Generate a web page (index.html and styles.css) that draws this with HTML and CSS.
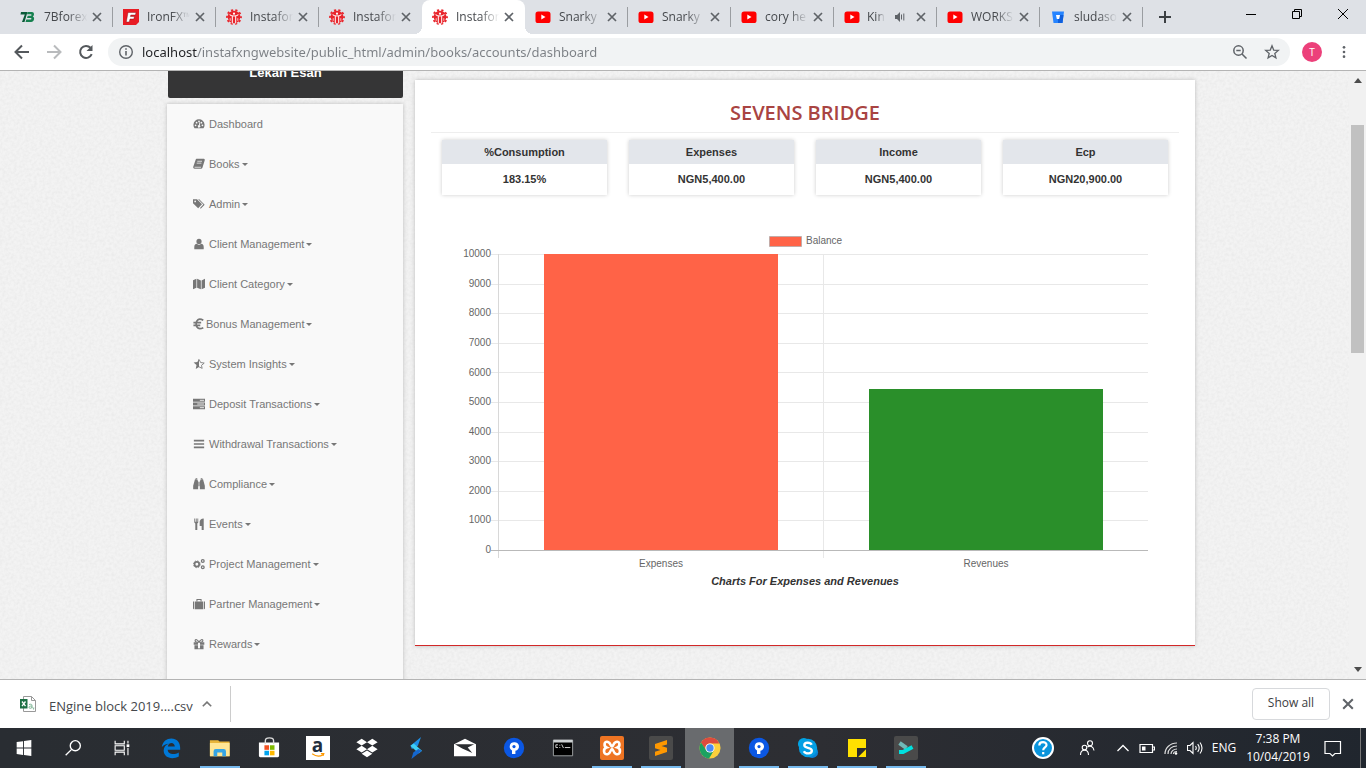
FILE: index.html
```html
<!DOCTYPE html>
<html lang="en">
<head>
<meta charset="utf-8">
<title>Instaforex NG Admin - Accounts Dashboard</title>
<link rel="stylesheet" href="styles.css">
</head>
<body>
<svg class="defs" aria-hidden="true">
  <symbol id="x" viewBox="0 0 10 10"><path d="M1 1l8 8M9 1l-8 8" stroke="#5f6368" stroke-width="1.7" fill="none"/></symbol>
  <symbol id="yt" viewBox="0 0 16 16"><rect x="0.5" y="2.5" width="15" height="11.5" rx="2.6" fill="#f00"/><path d="M6.3 5.6v5l4.2-2.5z" fill="#fff"/></symbol>
  <symbol id="insta" viewBox="0 0 16 16"><circle cx="8" cy="8" r="6.3" fill="#e8242b"/><circle cx="8" cy="8" r="7" fill="none" stroke="#e8242b" stroke-width="1.800" stroke-dasharray="2.200 2.200" stroke-dashoffset="1.100"/><g fill="none" stroke="#fff"><path d="M3.600 5.500C4.500 7 6 7 8 7s3.500 0 4.400-1.500" stroke-width="1.100"/><path d="M6.300 7v7.500M9.700 7v7.500" stroke-width="1"/><path d="M4.200 9.200v2.600M11.800 9.200v2.600" stroke-width=".7"/></g><circle cx="8" cy="4.700" r="1.100" fill="#fff"/></symbol>
  <symbol id="maps" viewBox="0 0 22 22"><circle cx="11" cy="11" r="10.200" fill="#0b57e3"/><path d="M11 5.300a4.300 4.300 0 0 0-2 8.100V17h3.400v-3.200A4.300 4.300 0 0 0 11 5.300z" fill="#fff"/><circle cx="11" cy="9.600" r="1.600" fill="#0b57e3"/></symbol>
</svg>

<header class="tabs">
  <div class="tab"><button class="tab-main"><svg viewBox="0 0 16 16"><path d="M1 3h6.500L4.500 13H2L4.800 5.500H.5z" fill="#0a5a38"/><path d="M7.500 3H12c2.500 0 2.600 3.600.8 4.600 2.400 1 1.300 5.400-1.600 5.400H5.500l.8-2.400h4.400c1.100 0 1-1.600 0-1.600H7l.7-2.300h3.100c1 0 1-1.400.1-1.400H7z" fill="#16804f"/></svg><span>7Bforex</span></button><button class="close" aria-label="Close"><svg><use href="#x"/></svg></button></div>
  <div class="tab"><button class="tab-main"><svg viewBox="0 0 16 16"><path d="M0 0h16v13l-3 3H0z" fill="#e81c24"/><path d="M5 3.500h8L12.400 6H7.800l-.4 1.500h4L10.800 10H7l-.8 3H3.300z" fill="#fff" stroke="#6d0d12" stroke-width=".4"/></svg><span>IronFX™</span></button><button class="close" aria-label="Close"><svg><use href="#x"/></svg></button></div>
  <div class="tab"><button class="tab-main"><svg><use href="#insta"/></svg><span>Instafor</span></button><button class="close" aria-label="Close"><svg><use href="#x"/></svg></button></div>
  <div class="tab before"><button class="tab-main"><svg><use href="#insta"/></svg><span>Instafor</span></button><button class="close" aria-label="Close"><svg><use href="#x"/></svg></button></div>
  <div class="tab active"><button class="tab-main"><svg><use href="#insta"/></svg><span>Instafor</span></button><button class="close" aria-label="Close"><svg><use href="#x"/></svg></button></div>
  <div class="tab"><button class="tab-main"><svg><use href="#yt"/></svg><span>Snarky</span></button><button class="close" aria-label="Close"><svg><use href="#x"/></svg></button></div>
  <div class="tab"><button class="tab-main"><svg><use href="#yt"/></svg><span>Snarky</span></button><button class="close" aria-label="Close"><svg><use href="#x"/></svg></button></div>
  <div class="tab"><button class="tab-main"><svg><use href="#yt"/></svg><span>cory he</span></button><button class="close" aria-label="Close"><svg><use href="#x"/></svg></button></div>
  <div class="tab"><button class="tab-main playing"><svg><use href="#yt"/></svg><span>Kin</span><svg class="sound" viewBox="0 0 12 12"><path d="M1 4h2l3-3v10L3 8H1z" fill="#5f6368"/><path d="M7.500 3.500v5M9.800 2.500v7" stroke="#5f6368" fill="none"/></svg></button><button class="close" aria-label="Close"><svg><use href="#x"/></svg></button></div>
  <div class="tab"><button class="tab-main"><svg><use href="#yt"/></svg><span>WORKS</span></button><button class="close" aria-label="Close"><svg><use href="#x"/></svg></button></div>
  <div class="tab"><button class="tab-main"><svg viewBox="0 0 16 16"><path d="M2 2.500h12L12.500 14h-9z" fill="#2684ff"/><path d="M8 6h5.500L12.500 14H8z" fill="#0f5fdc"/><path d="M6 6h4l-.8 4H6.800z" fill="#fff"/></svg><span>sludaso</span></button><button class="close" aria-label="Close"><svg><use href="#x"/></svg></button></div>
  <button class="newtab" aria-label="New tab"><svg viewBox="0 0 12 12"><path d="M6 0v12M0 6h12" stroke="#3c4043" stroke-width="2"/></svg></button>
  <div class="window-controls">
    <button aria-label="Minimize"><svg viewBox="0 0 12 12"><path d="M1 6.500h10" stroke="#000"/></svg></button>
    <button aria-label="Restore"><svg viewBox="0 0 12 12"><path d="M1.500 3.500h7v7h-7zM3.500 3.500v-2h7v7h-2" fill="none" stroke="#000"/></svg></button>
    <button aria-label="Close window"><svg viewBox="0 0 12 12"><path d="M1 1l10 10M11 1L1 11" stroke="#000"/></svg></button>
  </div>
</header>

<nav class="toolbar">
  <button aria-label="Back"><svg viewBox="0 0 16 16"><path d="M15 8H2M8 1.500L1.500 8 8 14.500" fill="none" stroke="#54585c" stroke-width="2"/></svg></button>
  <button aria-label="Forward"><svg viewBox="0 0 16 16"><path d="M1 8h13M8 1.500L14.500 8 8 14.500" fill="none" stroke="#b9bbbd" stroke-width="2"/></svg></button>
  <button aria-label="Reload"><svg viewBox="0 0 16 16"><path d="M13.700 10.200A6 6 0 1 1 12.500 3.800" fill="none" stroke="#54585c" stroke-width="2"/><path d="M14.500 1v6h-6z" fill="#54585c"/></svg></button>
  <div class="omnibox">
    <svg viewBox="0 0 16 16"><circle cx="8" cy="8" r="6.300" fill="none" stroke="#5f6368" stroke-width="1.400"/><path d="M8 7v4.500M8 4.200v1.600" stroke="#5f6368" stroke-width="1.600"/></svg>
    <input type="text" aria-label="Address" value="localhost/instafxngwebsite/public_html/admin/books/accounts/dashboard">
    <button aria-label="Zoom"><svg viewBox="0 0 16 16"><circle cx="6.500" cy="6.500" r="4.700" fill="none" stroke="#5f6368" stroke-width="1.500"/><path d="M4.300 6.500h4.400M10 10l4.500 4.500" stroke="#5f6368" stroke-width="1.500"/></svg></button>
    <button aria-label="Bookmark"><svg viewBox="0 0 16 16"><path d="M8 1.800l1.700 4.300 4.600.3-3.500 3 1.100 4.500L8 11.500l-3.900 2.400 1.100-4.500-3.500-3 4.600-.3z" fill="none" stroke="#5f6368" stroke-width="1.300"/></svg></button>
  </div>
  <button class="avatar">T</button>
  <button class="menu" aria-label="Menu"><svg viewBox="0 0 16 16"><g fill="#5f6368"><circle cx="8" cy="2.700" r="1.500"/><circle cx="8" cy="8" r="1.500"/><circle cx="8" cy="13.300" r="1.500"/></g></svg></button>
</nav>

<div class="viewport">
  <div class="page">
    <div class="container">
      <aside class="sidebar">
        <div class="user">Lekan Esan</div>
        <nav class="side-menu">
          <a href="#"><svg viewBox="0 0 14 14"><path d="M1.800 12A6.500 6.500 0 1 1 12.200 12z"/><g fill="#f9f9f9"><circle cx="3" cy="8.500" r="1"/><circle cx="4.200" cy="5.500" r="1"/><circle cx="7" cy="4" r="1"/><circle cx="9.800" cy="5.500" r="1"/><circle cx="11" cy="8.500" r="1"/><path d="M7.500 5l1 .2-.6 3.300a1.500 1.500 0 1 1-1-.2z"/></g></svg>Dashboard</a>
          <a href="#"><svg viewBox="0 0 14 14"><path d="M4.500 1h8.300c.9.300 1.100.9.900 1.600l-2.600 8.600c-.3.900-.9 1.400-1.800 1.400H1.900C.5 12.600-.1 11.300.4 10L3 2.300C3.300 1.500 3.700 1 4.500 1z"/><path d="M5 3.800h5.500M4.300 6h5.500M1.800 10.800h7.500" stroke="#f9f9f9" stroke-width=".9" fill="none"/></svg>Books<i class="caret"></i></a>
          <a href="#"><svg viewBox="0 0 14 14"><path d="M0 1.500h4.700L10.500 7.300 6 12 0 6zM6 1.500h1.300L13.600 7.800 9 12.600l-.8-.8L12 7.600z"/><circle cx="2.500" cy="4" r="1" fill="#f9f9f9"/></svg>Admin<i class="caret"></i></a>
          <a href="#"><svg viewBox="0 0 14 14"><circle cx="7" cy="4" r="3"/><path d="M1.500 13v-2.500c0-2.500 1.500-3.700 3-3.700 1.500 1.300 3.500 1.300 5 0 1.500 0 3 1.200 3 3.700V13z"/></svg>Client Management<i class="caret"></i></a>
          <a href="#"><svg viewBox="0 0 14 14"><path d="M0 2.500L4 1v10.500L0 13zM4.800 1l4.400 1.800V13l-4.400-1.700zM10 2.800L14 1v10.500L10 13z"/></svg>Client Category<i class="caret"></i></a>
          <a href="#" class="euro"><svg viewBox="0 0 14 14"><path d="M12 2.700C6.500-.5 3.700 2.700 3.700 7S6.500 14 12 11.300M.5 5.500h9M.5 8.500h8" fill="none" stroke="#777" stroke-width="2"/></svg>Bonus Management<i class="caret"></i></a>
          <a href="#"><svg viewBox="0 0 14 14"><path d="M7 .8v9.800l-3.800 2.200.9-4.500L.7 5.300l4.400-.5z"/><path d="M7 1.500l1.900 3.800 4.200.6-3.200 2.700.8 3.500L7 10.300" fill="none" stroke="#777" stroke-width="1"/></svg>System Insights<i class="caret"></i></a>
          <a href="#"><svg viewBox="0 0 14 14"><path d="M0 1h14v3.400H0zM0 5.300h14v3.400H0zM0 9.600h14V13H0z"/><path d="M8 2.700h4.800M5 7h7.800M8 11.300h4.800" stroke="#f9f9f9" stroke-width="1"/></svg>Deposit Transactions<i class="caret"></i></a>
          <a href="#"><svg viewBox="0 0 14 14"><path d="M1 2h12v2H1zM1 6h12v2H1zM1 10h12v2H1z"/></svg>Withdrawal Transactions<i class="caret"></i></a>
          <a href="#"><svg viewBox="0 0 14 14"><path d="M2.300 1.500H5L6 4v9H.2V9zM9 1.500h2.700L13.800 9v4H8V4zM6.400 4.500h1.200v5H6.400zM3 0h2v1H3zM9 0h2v1H9z"/></svg>Compliance<i class="caret"></i></a>
          <a href="#"><svg viewBox="0 0 14 14"><path d="M1.500.5h1v4h.8v-4h1v4h.8v-4h1v4.800L5 6.500V14H2.700V6.500L1.500 5.300zM12.500.5V14h-2.400V9.200H7.800V4.500c0-2 1.700-4 4.700-4z"/></svg>Events<i class="caret"></i></a>
          <a href="#"><svg viewBox="0 0 14 14"><g fill="none" stroke="#777"><circle cx="4.500" cy="7.300" r="2.700" stroke-width="2"/><circle cx="4.500" cy="7.300" r="4" stroke-width="1" stroke-dasharray="1.600 1.540"/><circle cx="11.400" cy="3.500" r="1.600" stroke-width="1.500"/><circle cx="11.400" cy="10.900" r="1.600" stroke-width="1.500"/></g></svg>Project Management<i class="caret"></i></a>
          <a href="#"><svg viewBox="0 0 14 14"><path d="M0 4h1.500v9H.8L0 12.200zM2.300 4h9.400v9H2.300zM12.500 4H14v8.200l-.8.800h-.7z"/><path d="M4.600 4V1.700h4.800V4" fill="none" stroke="#777" stroke-width="1.200"/></svg>Partner Management<i class="caret"></i></a>
          <a href="#"><svg viewBox="0 0 14 14"><path d="M.8 5h5v3h-5zM8.200 5h5v3h-5zM1.700 8.500h4.100V13H1.700zM8.200 8.500h4.100V13H8.200zM6 12h2v1H6z"/><path d="M7 5C5.500 1.500 2.500 1.200 2.500 3.200 2.500 4.500 4 5 7 5zM7 5c1.500-3.500 4.500-3.800 4.500-1.800C11.500 4.500 10 5 7 5z" fill="none" stroke="#777" stroke-width="1.300"/></svg>Rewards<i class="caret"></i></a>
        </nav>
      </aside>
      <main class="panel">
        <h1>SEVENS BRIDGE</h1>
        <section class="stats">
          <div class="stat"><h2>%Consumption</h2><p>183.15%</p></div>
          <div class="stat"><h2>Expenses</h2><p>NGN5,400.00</p></div>
          <div class="stat"><h2>Income</h2><p>NGN5,400.00</p></div>
          <div class="stat"><h2>Ecp</h2><p>NGN20,900.00</p></div>
        </section>
        <figure>
          <svg class="chart" viewBox="0 0 748 345" role="img" aria-label="Balance by expenses and revenues">
            <path d="M338.500 8.500h32v10h-32z" fill="#ff6347" stroke="#aaa" stroke-opacity=".7"/>
            <text x="375" y="16">Balance</text>
            <path d="M60 26.500h657M60 56.500h657M60 85.500h657M60 115.500h657M60 144.500h657M60 174.500h657M60 204.500h657M60 233.500h657M60 263.500h657M60 292.500h657M392.500 26v304" stroke="#e8e8e8"/>
            <path d="M67.500 26v304" stroke="#d8d8d8"/>
            <path d="M113 26h234v296H113z" fill="#ff6347"/>
            <path d="M438 161h234v161H438z" fill="#2a8f2a"/>
            <path d="M60 322.500h657" stroke="#b9b9b9"/>
            <g text-anchor="end"><text x="60" y="29">10000</text><text x="60" y="59">9000</text><text x="60" y="88">8000</text><text x="60" y="118">7000</text><text x="60" y="148">6000</text><text x="60" y="177">5000</text><text x="60" y="207">4000</text><text x="60" y="236">3000</text><text x="60" y="266">2000</text><text x="60" y="295">1000</text><text x="60" y="325">0</text></g>
            <g text-anchor="middle"><text x="230" y="339">Expenses</text><text x="555" y="339">Revenues</text></g>
          </svg>
          <figcaption>Charts For Expenses and Revenues</figcaption>
        </figure>
      </main>
    </div>
  </div>
  <div class="scrollbar">
    <svg viewBox="0 0 8 5"><path d="M0 5l4-5 4 5z" fill="#4d4d4d"/></svg>
    <div class="track"><div class="thumb"></div></div>
    <svg viewBox="0 0 8 5"><path d="M0 0l4 5 4-5z" fill="#4d4d4d"/></svg>
  </div>
</div>

<section class="downloads">
  <button class="file">
    <svg class="csv" viewBox="0 0 16 16"><path d="M3.500.5h8l4 4v11h-12z" fill="#fff" stroke="#999"/><path d="M11.500.5v4h4" fill="none" stroke="#999"/><path d="M0 3h7.500v9.500H0z" fill="#1d7044"/><path d="M2 5.500l3.500 4.700M5.500 5.500L2 10.200" stroke="#fff" stroke-width="1.300"/><path d="M9 8.500c3-.8 3 .4 3 1.500v2.300M12 10c-2 0-3 .3-3 1.400 0 1.500 3 1 3-.4M13.800 11.500l-.3 2" fill="none" stroke="#7db594"/></svg>
    <span>ENgine block 2019....csv</span>
    <svg class="up" viewBox="0 0 10 6"><path d="M.8 5.300L5 1.100l4.200 4.200" fill="none" stroke="#777" stroke-width="1.600"/></svg>
  </button>
  <button class="show-all">Show all</button>
  <button class="close big" aria-label="Close downloads"><svg><use href="#x"/></svg></button>
</section>

<footer class="taskbar">
  <div class="apps">
    <button aria-label="Start"><svg viewBox="0 0 24 24"><path d="M4 5.500l7-1v7H4zM12 4.300l8-1.100v8.300h-8zM4 12.500h7v7l-7-1zM12 12.500h8v8.300l-8-1.100z" fill="#fff"/></svg></button>
    <button aria-label="Search"><svg viewBox="0 0 24 24"><circle cx="14.500" cy="9.500" r="5.500" fill="none" stroke="#fff" stroke-width="1.500"/><path d="M10.500 13.500L4 20" stroke="#fff" stroke-width="1.500"/></svg></button>
    <button aria-label="Task view"><svg viewBox="0 0 24 24"><path d="M4.500 4v3.500h10V4M4.500 20v-3.500h10V20M4.500 9.500h10v5h-10zM18.500 4v3M18.500 12v8" fill="none" stroke="#fff" stroke-width="1.200"/><path d="M17 8h3v3h-3z" fill="#fff"/></svg></button>
    <button aria-label="Edge"><svg viewBox="0 0 24 24"><path d="M2 11C3 4.500 7.500 1.500 12.300 1.500c6 0 9.700 4 9.700 10.300v2H8.400c.3 5.500 7.600 5.800 12.100 3v4.400C13.500 25 4 23 4 14.800c0-3.700 2.200-6.200 5.500-7.500C6.500 7.400 3.700 9 2 11zm6.500-.6h7.600c0-5-6.700-5.200-7.600 0z" fill="#0078d7"/></svg></button>
    <button class="open" aria-label="File Explorer"><svg viewBox="0 0 24 24"><path d="M1 3.500h9l1.500 1.500H22.500V21H1z" fill="#e8b53a"/><path d="M1 6.500h21.500V21H1z" fill="#ffe695"/><path d="M5 21v-5.500q0-2.500 2.500-2.500h8.500q2.500 0 2.500 2.500V21h-4v-4h-5.500v4z" fill="#35a5e5"/></svg></button>
    <button aria-label="Store"><svg viewBox="0 0 24 24"><path d="M1 6h22v14.500q0 1.500-1.500 1.500h-19Q1 22 1 20.500z" fill="#fff"/><path d="M8 8V4q0-3 4.500-3T17 4v4" fill="none" stroke="#ddd" stroke-width="1.500"/><path d="M7 9h5v5H7z" fill="#f25022"/><path d="M13 9h5v5h-5z" fill="#7fba00"/><path d="M7 15h5v5H7z" fill="#00a4ef"/><path d="M13 15h5v5h-5z" fill="#ffb900"/></svg></button>
    <button aria-label="Amazon"><span class="amazon">a<svg viewBox="0 0 18 6"><path d="M2 1q7 5 13 1M12.500.8L16 .5l-1 3" fill="none" stroke="#f90" stroke-width="1.500"/></svg></span></button>
    <button aria-label="Dropbox"><svg viewBox="0 0 24 24"><path d="M6.200 2L12 5.700 6.200 9.400.4 5.700zM17.800 2l5.800 3.700-5.800 3.700L12 5.700zM6.200 9.600l5.800 3.700L6.200 17 .4 13.300zM17.800 9.600l5.800 3.700-5.800 3.700-5.800-3.700zM12 14.600l5.800 3.700L12 22l-5.800-3.700z" fill="#fff"/></svg></button>
    <button aria-label="Notes app"><svg viewBox="0 0 24 24"><path d="M17.500 0L6 9.500 7.500 13 14 9.500z" fill="#1e90e8"/><path d="M6 9.500L9.500 7l9 8-3.500 3z" fill="#3fd0f5"/><path d="M18.500 15L7 24l2-7 5.500-4z" fill="#1567cf"/></svg></button>
    <button aria-label="Mail"><svg viewBox="0 0 24 24"><path d="M0 8l12-6 12 6v13H0z" fill="#fff"/><path d="M1 8h21l-7 3.500 5 6-11-5z" fill="#2b2d31"/></svg></button>
    <button aria-label="Maps"><svg><use href="#maps"/></svg></button>
    <button aria-label="Command Prompt"><svg viewBox="0 0 24 24"><path d="M1.500 3.500h21v17h-21z" fill="#000" stroke="#a4a8aa"/><path d="M1.500 4.500h21" stroke="#ccd0d2" stroke-width="3"/><path d="M6.500 8.500H4.200v3h2.300M8.500 8.500v1M8.500 11v1M10.500 8l2 4M14 11.500h6" fill="none" stroke="#ddd"/></svg></button>
    <button class="open tile" aria-label="XAMPP"><svg viewBox="0 0 24 24"><rect width="24" height="24" rx="2" fill="#ee7423"/><path d="M8 6c-4-1.500-4.500 4-1.500 5.500C3 12.500 3 19.500 8 18c3-1 2.500-5 4-5s1 4 4 5c5 1.500 5-5.500 1.500-6.500C20.500 10 20 4.500 16 6c-3 1-2.500 4.500-4 4.500S11 7 8 6z" fill="none" stroke="#fff" stroke-width="2.600"/></svg></button>
    <button class="open tile" aria-label="Sublime Text"><svg viewBox="0 0 24 24"><rect width="24" height="24" rx="2" fill="#4a4a4a"/><path d="M6 8l12-4v4.500L12.500 10l5.500 1.700V16L6 20v-4.300l5.500-1.700L6 12.300z" fill="#ff9800"/></svg></button>
    <button class="open current" aria-label="Chrome"><svg viewBox="0 0 24 24"><circle cx="12" cy="12" r="11.500" fill="#fdd03b"/><path d="M2.200 6A11.500 11.500 0 0 1 22.200 7H12a5 5 0 0 0-4.800 3.200L7 14z" fill="#dd4b3e"/><path d="M2.200 6A11.500 11.500 0 0 0 11 23.500l5-8.500-4 1.500a5 5 0 0 1-4.500-2.500z" fill="#1ba261"/><circle cx="12" cy="12" r="5" fill="#fff"/><circle cx="12" cy="12" r="4" fill="#4a8bf5"/></svg></button>
    <button class="open" aria-label="Maps"><svg><use href="#maps"/></svg></button>
    <button class="open" aria-label="Skype"><svg viewBox="0 0 24 24"><circle cx="7.500" cy="7.500" r="6.500" fill="#00a5e5"/><circle cx="16.500" cy="16.500" r="6.500" fill="#0a84d8"/><circle cx="12" cy="12" r="10" fill="#049fe4"/><path d="M16 8.500C14.500 5.500 8 5.500 8 9c0 3.800 8.200 1.900 8.200 6 0 3.700-7 3.800-8.700.5" fill="none" stroke="#fff" stroke-width="2.600"/></svg></button>
    <button class="open tile" aria-label="Sticky Notes"><svg viewBox="0 0 24 24"><path d="M3 3h18v18H3z" fill="#ffe100"/><path d="M12 21v-9h9v9z" fill="#292b2f"/><path d="M13.200 21l7.800-7.800V21z" fill="#ffe100"/></svg></button>
    <button class="open tile" aria-label="Terminal"><svg viewBox="0 0 24 24"><rect width="24" height="24" rx="2" fill="#4a4a4a"/><path d="M5.500 7l7 5" stroke="#6fb9b7" stroke-width="4"/><path d="M5 16h4l9.500-5" fill="none" stroke="#00e0de" stroke-width="4"/></svg></button>
  </div>
  <div class="tray">
    <button class="help" aria-label="Help"><svg viewBox="0 0 24 24"><circle cx="12" cy="12" r="10" fill="#0a94dc" stroke="#fff" stroke-width="2"/><path d="M8.300 9.500c0-4.500 7.500-4.200 7.200-.3-.2 2.300-3.300 2.300-3.300 5M12.200 16v2.300" fill="none" stroke="#fff" stroke-width="2.200"/></svg></button>
    <button class="people" aria-label="People"><svg viewBox="0 0 16 16"><g fill="none" stroke="#fff" stroke-width="1.100"><circle cx="5.500" cy="7.500" r="2.300"/><path d="M1.500 15c0-3 1.500-4.800 4-4.800s4 1.800 4 4.800"/><circle cx="11" cy="3.300" r="2.500"/><path d="M8.500 7c2.500-2 6-.5 6.500 3.500"/></g></svg></button>
    <button class="chev" aria-label="Hidden icons"><svg viewBox="0 0 16 16"><path d="M2.500 11L8 5.500l5.500 5.500" fill="none" stroke="#fff" stroke-width="1.300"/></svg></button>
    <button class="small" aria-label="Battery"><svg viewBox="0 0 16 16"><path d="M1 4.500h12.500v8H1zM14 7h1.500v3H14" fill="none" stroke="#fff" stroke-width="1.200"/><path d="M3 6.500h3.500v4H3z" fill="#fff"/></svg></button>
    <button class="small" aria-label="Network"><svg viewBox="0 0 16 16"><g fill="none" stroke="#ddd" stroke-width="1.200"><path d="M2 14C2 8 7 3 14 3M5 14c0-5 4-8 9-8M8 14c0-3 3-5 6-5M10.500 14c0-1.500 1.500-2.500 3.500-2.500"/></g><circle cx="13" cy="13.500" r="1.300" fill="#fff"/></svg></button>
    <button class="small" aria-label="Volume"><svg viewBox="0 0 16 16"><g fill="none" stroke="#fff" stroke-width="1.100"><path d="M.5 5.500H3L6 2.500v11l-3-3H.500zM8.500 6q1.500 2 0 4M10.700 4.200q3 3.800 0 7.600M13 2.500q4 5.500 0 11"/></g></svg></button>
    <button class="lang">ENG</button>
    <button class="clock"><time>7:38 PM<br>10/04/2019</time></button>
    <button class="notes" aria-label="Notifications"><svg viewBox="0 0 18 18"><path d="M1 2.500h15.500v12H11l-2.500 2.500L6 14.500H1z" fill="none" stroke="#fff" stroke-width="1.200"/></svg></button>
  </div>
</footer>
</body>
</html>
```

FILE: styles.css
```css
* { box-sizing: border-box; }
body {
  margin: 0;
  height: 100vh;
  display: flex;
  flex-direction: column;
  overflow: hidden;
  font: 12px/16px "Open Sans", "Noto Sans", sans-serif;
  color: #333;
}
button { border: 0; padding: 0; margin: 0; background: none; font: inherit; color: inherit; }
svg { display: block; flex: none; }
a { color: inherit; text-decoration: none; }
.defs { position: absolute; width: 0; height: 0; }

/* tab strip */
.tabs { display: flex; height: 34px; flex: none; background: #dee1e6; padding-left: 10px; }
.tab { width: 103px; height: 34px; display: flex; align-items: center; padding: 0 11px 0 10px; position: relative; }
.tab:not(.active):not(.before)::after { content: ""; position: absolute; right: 0; top: 7px; height: 20px; width: 1px; background: #9a9da1; }
.tab-main { display: flex; align-items: center; gap: 8px; flex: 1; min-width: 0; height: 100%; }
.tab-main svg { width: 16px; height: 16px; }
.tab-main .sound { width: 12px; height: 12px; margin-right: 10px; }
.playing { gap: 7px; }
.tab-main span {
  flex: 1; white-space: nowrap; text-align: left; color: #45484c;
  mask-image: linear-gradient(90deg, #000 50%, transparent 90%);
}
.close svg { width: 10px; height: 10px; }
.close.big svg { width: 12px; height: 12px; }
.tab.active { background: #fff; border-radius: 8px 8px 0 0; }
.tab.active::before, .tab.active::after { content: ""; position: absolute; bottom: 0; width: 8px; height: 8px; }
.tab.active::before { left: -8px; background: radial-gradient(circle at 0 0, transparent 8px, #fff 8px); }
.tab.active::after { right: -8px; background: radial-gradient(circle at 100% 0, transparent 8px, #fff 8px); }
.newtab { width: 44px; display: grid; place-items: center; }
.newtab svg { width: 12px; height: 12px; }
.window-controls { display: flex; margin-left: auto; height: 28px; }
.window-controls button { width: 46px; display: grid; place-items: center; }
.window-controls svg { width: 12px; height: 12px; }

/* toolbar */
.toolbar { display: flex; flex: none; align-items: center; height: 37px; padding: 0 12px 0 6px; background: #fff; border-bottom: 1px solid #b4b4b4; }
.toolbar > button { width: 32px; display: grid; place-items: center; }
.toolbar svg { width: 16px; height: 16px; }
.omnibox { flex: 1; display: flex; align-items: center; height: 28px; margin: 0 12px 0 6px; padding: 0 10px; background: #f1f3f4; border-radius: 14px; }
.omnibox input {
  flex: 1; min-width: 0; margin-left: 8px; padding: 0; border: 0; outline: 0; font: 13px/20px "Noto Sans", sans-serif;
  color: transparent; background: linear-gradient(90deg, #202124 55px, #7b7f84 55px); background-clip: text;
}
.omnibox button { margin-left: 16px; }
.toolbar .avatar { width: 20px; height: 20px; border-radius: 50%; background: #ec407a; color: #fff; font-size: 10px; }
.toolbar .menu { width: 20px; margin-left: 12px; }
.toolbar .menu svg { width: 14px; height: 14px; }

/* page */
.viewport {
  flex: 1; min-height: 0; display: flex; background-color: #f3f3f3;
  background-image: url("data:image/svg+xml,%3Csvg xmlns='http://www.w3.org/2000/svg' width='160' height='160'%3E%3Cfilter id='n'%3E%3CfeTurbulence type='fractalNoise' baseFrequency='.35' numOctaves='2' stitchTiles='stitch'/%3E%3CfeColorMatrix values='0 0 0 0 0 0 0 0 0 0 0 0 0 0 0 .06 0 0 0 -.02'/%3E%3C/filter%3E%3Crect width='160' height='160' filter='url(%23n)'/%3E%3C/svg%3E");
}
.page { flex: 1; min-width: 0; overflow: hidden; font-family: "Liberation Sans", Arial, sans-serif; font-size: 11px; }
.container { max-width: 1041px; margin: 0 auto; padding-left: 13px; display: flex; align-items: flex-start; gap: 12px; }
.sidebar { width: 236px; flex: none; }
.user { height: 40px; margin: -13px 0 6px 1px; padding-top: 7px; background: #353536; color: #fff; border-radius: 2px; text-align: center; font-size: 13px; font-weight: 700; }
.side-menu { padding-bottom: 40px; background: #f9f9f9; box-shadow: 0 0 4px #bbb; color: #777; }
.side-menu a { display: flex; align-items: center; height: 40px; padding-left: 26px; gap: 4px; }
.side-menu .euro { gap: 1px; }
.side-menu svg { width: 12px; height: 12px; fill: #777; }
.side-menu .caret { margin-left: -2px; border: 3px solid transparent; border-top-color: #777; border-bottom: 0; }
.side-menu .euro .caret { margin-left: 1px; }

.panel { flex: 1; min-width: 0; margin-top: 9px; padding: 16px 16px 56px; background: #fff; border-bottom: 1px solid #d22828; box-shadow: 0 0 4px #bbb; }
.panel h1 { margin: 0; padding: 5px 0 7px; border-bottom: 1px solid #eee; text-align: center; font: 600 20px/24px "Open Sans", sans-serif; color: #a94442; }
.stats { display: grid; grid-template-columns: repeat(4, 1fr); gap: 22px; padding: 7px 11px 0; text-align: center; }
.stat { box-shadow: 0 0 4px #ccc; font-weight: 700; }
.stat h2 { margin: 0; background: #e3e6eb; font-size: 11px; line-height: 24px; }
.stat p { margin: 0; line-height: 31px; }
figure { margin: 33px 0 0; }
.chart { width: 100%; height: auto; }
.chart text { font-size: 10px; fill: #666; }
figcaption { text-align: center; font-weight: 700; font-style: italic; }

.scrollbar { width: 17px; display: flex; flex-direction: column; align-items: center; padding: 7px 0; background: #f1f1f1; }
.scrollbar svg { width: 8px; height: 5px; }
.track { flex: 1; width: 13px; padding-top: 42px; }
.thumb { height: 228px; background: #c1c1c1; }

/* downloads */
.downloads { flex: none; display: flex; align-items: center; height: 49px; padding: 0 12px 0 20px; background: #fff; border-top: 1px solid #b4b4b4; }
.file { display: flex; align-items: center; height: 36px; width: 211px; border-right: 1px solid #ccc; font-size: 13px; color: #45484c; }
.file span { margin: 3px 9px 0 13px; white-space: nowrap; }
.csv { width: 16px; height: 16px; }
.up { width: 10px; height: 6px; }
.show-all { width: 78px; height: 32px; margin: 0 12px 0 auto; padding-bottom: 2px; border: 1px solid #d7d9dc; border-radius: 4px; color: #3c4043; }

/* taskbar */
.taskbar { flex: none; display: flex; justify-content: space-between; height: 40px; background: linear-gradient(90deg, #292d32, #2d2e33 60%, #20262e); color: #fff; }
.apps, .tray { display: flex; }
.apps button { width: 49px; display: grid; place-items: center; }
.apps button:first-child { width: 48px; }
.apps svg { width: 22px; height: 22px; }
.apps .tile svg { width: 24px; height: 24px; }
.apps .open { background: linear-gradient(#76b9ed, #76b9ed) center bottom / 40px 2px no-repeat; }
.apps .current { background: #696b6e; }
.amazon { width: 24px; height: 24px; padding-top: 2px; background: #fff; color: #232f3e; font: 700 19px/14px "Open Sans", sans-serif; }
.apps .amazon svg { width: 16px; height: 5px; margin: 1px auto 0; }
.tray { padding-right: 5px; }
.tray button { display: grid; place-items: center; width: 24px; }
.tray svg { width: 16px; height: 16px; }
.tray .help { width: 40px; }
.tray .help svg { width: 24px; height: 24px; }
.tray .people { width: 48px; }
.tray .lang { width: 34px; }
.tray .clock { width: 74px; font-size: 12px; line-height: 18px; }
.tray .notes { width: 46px; padding-right: 10px; border-right: 1px solid #777; }
.tray .notes svg { width: 18px; height: 18px; }
```
